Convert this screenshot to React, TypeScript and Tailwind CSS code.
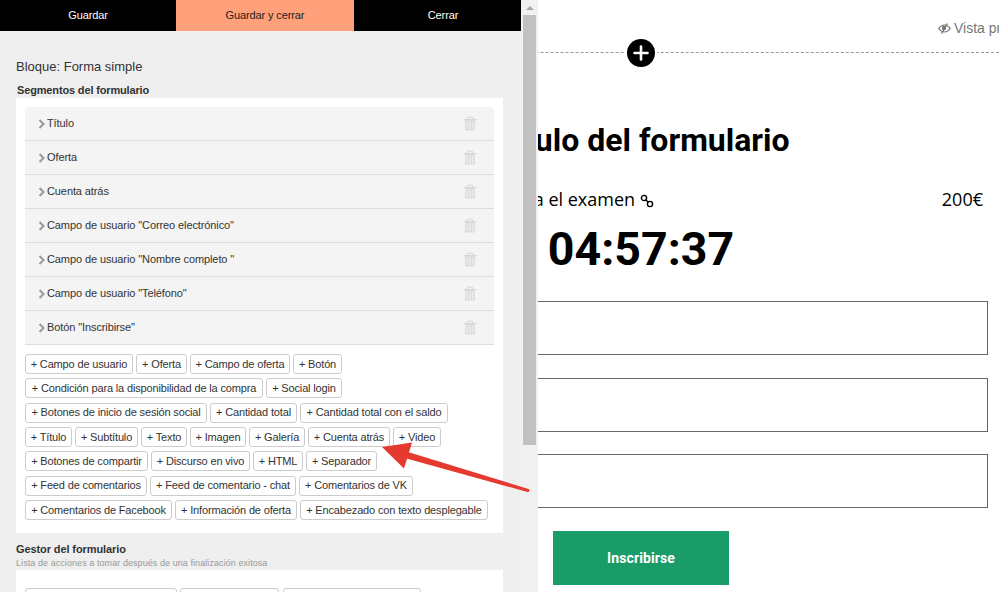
const rows = ["Título", "Oferta", "Cuenta atrás", 'Campo de usuario "Correo electrónico"', 'Campo de usuario "Nombre completo "', 'Campo de usuario "Teléfono"', 'Botón "Inscribirse"'];

const groups = [
  [["+ Campo de usuario", "w-[108px]"], ["+ Oferta", "w-[51px]"], ["+ Campo de oferta", "w-[100px]"], ["+ Botón", "w-[49px]"]],
  [["+ Condición para la disponibilidad de la compra", "w-[238px]"], ["+ Social login", "w-[76px]"]],
  [["+ Botones de inicio de sesión social", "w-[182px]"], ["+ Cantidad total", "w-[87px]"], ["+ Cantidad total con el saldo", "w-[148px]"]],
  [["+ Título", "w-[47px]"], ["+ Subtítulo", "w-[63px]"], ["+ Texto", "w-[46px]"], ["+ Imagen", "w-[56px]"], ["+ Galería", "w-[56px]"], ["+ Cuenta atrás", "w-[82px]"], ["+ Video", "w-[48px]"]],
  [["+ Botones de compartir", "w-[123px]"], ["+ Discurso en vivo", "w-[99px]"], ["+ HTML", "w-[50px]"], ["+ Separador", "w-[71px]"]],
  [["+ Feed de comentarios", "w-[122px]"], ["+ Feed de comentario - chat", "w-[146px]"], ["+ Comentarios de VK", "w-[114px]"]],
  [["+ Comentarios de Facebook", "w-[147px]"], ["+ Información de oferta", "w-[122px]"], ["+ Encabezado con texto desplegable", "w-[188px]"]],
];

function Trash() {
  return (
    <svg width="14" height="15" viewBox="0 0 14 15" className="shrink-0">
      <path d="M0.5 3.5H13.5" stroke="#d6d6d6" strokeWidth="1" />
      <path d="M4.5 3V1.2H9.5V3" fill="none" stroke="#d6d6d6" strokeWidth="1" />
      <path d="M2 4H12V14.5H2Z" fill="#dcdcdc" />
      <path d="M4 5.5V13M7 5.5V13M10 5.5V13" stroke="#f4f4f4" strokeWidth="1" />
    </svg>
  );
}

function Chevron() {
  return (
    <svg width="7" height="10" viewBox="0 0 7 10" className="shrink-0">
      <path d="M1.5 1L5.5 5L1.5 9" fill="none" stroke="#999999" strokeWidth="2" />
    </svg>
  );
}

export default function App() {
  return (
    <div className="relative h-[592px] w-[999px] overflow-hidden bg-white font-['Liberation_Sans',Arial,sans-serif]">
      <main className="h-full">
        <div className="h-[52px] pl-[938px] pt-[20px]">
          <div className="flex w-[120px] items-center gap-[3px] text-[14px] leading-[17px] text-[#777777]">
            <svg width="13" height="11" viewBox="0 0 13 11" className="shrink-0">
              <path d="M0.7 5.5C2.5 3 4.5 2 6.5 2S10.5 3 12.3 5.5C10.5 8 8.5 9 6.5 9S2.5 8 0.7 5.5Z" fill="none" stroke="#777777" strokeWidth="1.2" />
              <circle cx="6" cy="5" r="2.2" fill="#777777" />
              <path d="M9.5 0.5L3.5 10.5" stroke="#777777" strokeWidth="1.4" />
            </svg>
            <span className="whitespace-nowrap">Vista previa</span>
          </div>
        </div>
        <div className="relative border-t border-dashed border-[#999999]">
          <div className="absolute left-[625px] top-[-16px] flex h-[32px] w-[32px] items-center justify-center rounded-full bg-white">
            <div className="flex h-[28px] w-[28px] items-center justify-center rounded-full bg-black">
              <svg width="16" height="16" viewBox="0 0 16 16">
                <path d="M8 1.5V14.5M1.5 8H14.5" stroke="#ffffff" strokeWidth="2.6" strokeLinecap="round" />
              </svg>
            </div>
          </div>
        </div>
        <div className="ml-[294px] w-[694px] text-black">
          <h1 className="mt-[69px] pl-[3px] text-center font-['Roboto',sans-serif] text-[32px] font-bold leading-[36px]">Título del formulario</h1>
          <div className="mt-[29px] flex items-center justify-between pl-[105px] pr-[5px] font-['Open_Sans',sans-serif] text-[18px] font-normal leading-[24px]">
            <div className="flex items-center gap-[5px]">
              <span className="whitespace-nowrap">Preparación para el examen</span>
              <svg width="14" height="14" viewBox="0 0 14 14" className="mt-[3px]">
                <circle cx="4" cy="4" r="2.6" fill="none" stroke="#000000" strokeWidth="1.4" />
                <circle cx="10" cy="10" r="2.6" fill="none" stroke="#000000" strokeWidth="1.4" />
                <path d="M5.5 5.5L8.5 8.5" stroke="#000000" strokeWidth="1.4" />
              </svg>
            </div>
            <span>200€</span>
          </div>
          <div className="mt-[10px] text-center font-['Roboto',sans-serif] text-[46.5px] font-bold leading-[56px]">04:57:37</div>
          <div className="mt-[24px] h-[54px] border border-[#666666]" />
          <div className="mt-[23px] h-[54px] border border-[#666666]" />
          <div className="mt-[22px] h-[54px] border border-[#666666]" />
          <div className="ml-[259px] mt-[23px] flex h-[54px] w-[176px] items-center justify-center bg-[#1a9c68] font-['Roboto',sans-serif] text-[14px] font-bold tracking-[0.1px] text-white">
            Inscribirse
          </div>
        </div>
      </main>

      <aside className="absolute left-0 top-0 flex h-full w-[538px] bg-[#efefef]">
        <div className="h-full w-[521px] shrink-0 overflow-hidden">
          <div className="flex h-[31px] text-[11px] tracking-[-0.12px]">
            <div className="flex w-[176px] shrink-0 items-center justify-center bg-black text-white">Guardar</div>
            <div className="flex w-[178px] shrink-0 items-center justify-center bg-[#ffa07a] text-[#222222]">Guardar y cerrar</div>
            <div className="flex w-[178px] shrink-0 items-center justify-center bg-black text-white">Cerrar</div>
          </div>
          <div className="pl-[16px] pr-[18px]">
            <div className="mt-[27px] text-[13px] leading-[17px] text-[#333333]">Bloque: Forma simple</div>
            <div className="ml-[1px] mt-[8px] text-[11px] font-bold leading-[14px] tracking-[-0.15px] text-[#333333]">Segmentos del formulario</div>
            <div className="mt-[1px] h-[435px] bg-white px-[9px] pt-[9px]">
              <div className="overflow-hidden rounded-t-[4px]">
                {rows.map((r) => (
                  <div key={r} className="flex h-[34px] items-center border-b border-[#dddddd] bg-[#f4f4f4] pl-[13px] pr-[17px] text-[11px] tracking-[-0.1px] text-[#333333]">
                    <Chevron />
                    <span className="ml-[2px] flex-1 whitespace-nowrap">{r}</span>
                    <Trash />
                  </div>
                ))}
              </div>
              <div className="mt-[9px] flex flex-col gap-[4.33px]">
                {groups.map((g, i) => (
                  <div key={i} className="flex gap-[3px]">
                    {g.map(([b, w]) => (
                      <div key={b} className={`flex h-[20px] items-center justify-center whitespace-nowrap rounded-[3px] border border-[#cccccc] bg-white text-[11px] tracking-[-0.15px] text-[#333333] ${w}`}>
                        {b}
                      </div>
                    ))}
                  </div>
                ))}
              </div>
            </div>
            <div className="mt-[9px] text-[11px] font-bold leading-[14px] tracking-[-0.1px] text-[#333333]">Gestor del formulario</div>
            <div className="mt-[1px] text-[9px] leading-[13px] tracking-[0.07px] text-[#999999]">Lista de acciones a tomar después de una finalización exitosa</div>
            <div className="h-[60px] bg-white px-[9px] pt-[18px]">
              <div className="flex">
                <div className="h-[20px] w-[152px] rounded-[3px] border border-[#cccccc]" />
                <div className="ml-[3px] h-[20px] w-[99px] rounded-[3px] border border-[#cccccc]" />
                <div className="ml-[4px] h-[20px] w-[138px] rounded-[3px] border border-[#cccccc]" />
              </div>
            </div>
          </div>
        </div>
        <div className="h-full w-[17px] bg-[#f1f1f1] pl-[2px]">
          <div className="flex h-[15px] w-[13px] items-center justify-center">
            <div className="h-0 w-0 border-x-[4px] border-b-[4px] border-x-transparent border-b-[#a3a3a3]" />
          </div>
          <div className="h-[430px] w-[13px] bg-[#c1c1c1]" />
        </div>
      </aside>

      <svg width="999" height="592" viewBox="0 0 999 592" className="pointer-events-none absolute left-0 top-0">
        <path d="M403 450.5L528.6 489A1.6 1.6 0 0 1 527.6 492L401 457Z" fill="#e53a30" />
        <path d="M382 447L412 442.5L404 468.5Z" fill="#e53a30" />
      </svg>
    </div>
  );
}
